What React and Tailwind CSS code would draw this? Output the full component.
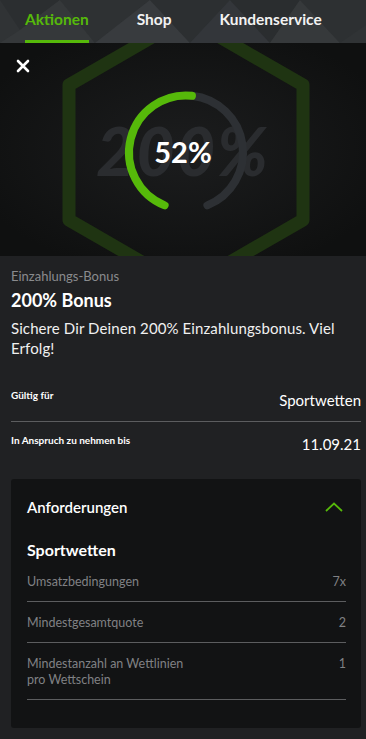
import React from "react";

const GREEN = "#56b90a";

// point on the gauge circle, angle measured clockwise from top
function pt(cx, cy, r, deg) {
  const a = (deg * Math.PI) / 180;
  return [cx + r * Math.sin(a), cy - r * Math.cos(a)];
}

function arc(cx, cy, r, from, to) {
  const [x1, y1] = pt(cx, cy, r, from);
  const [x2, y2] = pt(cx, cy, r, to);
  const large = to - from > 180 ? 1 : 0;
  return `M ${x1} ${y1} A ${r} ${r} 0 ${large} 1 ${x2} ${y2}`;
}

function HeaderPattern() {
  return (
    <svg className="absolute inset-0" width="366" height="43" viewBox="0 0 366 43">
      <rect width="366" height="43" fill="#303335" />
      <polygon points="0,0 60,0 20,30" fill="#2b2e30" />
      <polygon points="20,30 60,0 95,43 0,43" fill="#35383a" />
      <polygon points="60,0 150,0 95,43" fill="#2e3133" />
      <polygon points="150,0 95,43 190,43" fill="#383b3e" />
      <polygon points="150,0 230,0 190,43" fill="#2c2f31" />
      <polygon points="230,0 190,43 270,43" fill="#33363a" />
      <polygon points="230,0 300,0 270,43" fill="#2a2d2f" />
      <polygon points="300,0 270,43 340,43" fill="#36393b" />
      <polygon points="300,0 366,0 366,25 340,43" fill="#2d3032" />
    </svg>
  );
}

function HeroBackground() {
  return (
    <svg className="absolute inset-0" width="366" height="213" viewBox="0 0 366 213">
      <defs>
        <radialGradient id="glow" cx="50%" cy="50%" r="60%">
          <stop offset="0%" stopColor="#1c1d1e" />
          <stop offset="100%" stopColor="#0f1010" />
        </radialGradient>
      </defs>
      <rect width="366" height="213" fill="url(#glow)" />
      <polygon
        points="186,-25.5 303,42 303,177 186,244.5 69,177 69,42"
        fill="none"
        stroke="#1f3412"
        strokeWidth="13"
        strokeLinejoin="round"
      />
    </svg>
  );
}

function GaugeArc() {
  const cx = 186;
  const cy = 109.5;
  const r = 57;
  return (
    <svg className="absolute inset-0" width="366" height="213" viewBox="0 0 366 213">
      <path d={arc(cx, cy, r, 6, 158)} fill="none" stroke="#2d3034" strokeWidth="8" strokeLinecap="round" />
      <path d={arc(cx, cy, r, -158, 6)} fill="none" stroke={GREEN} strokeWidth="8" strokeLinecap="round" />
    </svg>
  );
}

function Row({ label, value }) {
  return (
    <div className="flex justify-between items-start pt-[13px] pb-[11px] border-b border-[#5c5d5f] text-[12.5px] leading-4 text-[#808184]">
      <span className="max-w-[170px]">{label}</span>
      <span>{value}</span>
    </div>
  );
}

export default function App() {
  return (
    <div
      className="w-[366px] h-[739px] overflow-hidden bg-[#202123] text-white"
      style={{ fontFamily: "Lato, 'Open Sans', sans-serif" }}
    >
      {/* Tabs */}
      <div className="relative h-[43px]">
        <HeaderPattern />
        <div className="relative flex gap-12 px-[25px] h-full text-[15.5px] font-bold">
          <div className="relative flex items-center pb-[3px] text-[#56b90a]">
            Aktionen
            <div className="absolute left-0 right-0 bottom-0 h-[3px] bg-[#56b90a]" />
          </div>
          <div className="flex items-center pb-[3px] text-[#f2f2f2]">Shop</div>
          <div className="flex items-center pb-[3px] text-[#f2f2f2]">Kundenservice</div>
        </div>
      </div>

      {/* Hero */}
      <div className="relative h-[213px] overflow-hidden">
        <HeroBackground />
        <div className="absolute left-0 right-0 top-[70px] text-center text-[66px] leading-[76px] font-black italic text-[#2a2c2f] tracking-[2px]">
          200%
        </div>
        <GaugeArc />
        <div className="absolute left-0 right-0 top-[91px] text-center text-[29px] leading-[36px] font-bold text-white">
          52%
        </div>
        <button className="absolute left-[16px] top-[16px] w-[14px] h-[14px]">
          <svg width="14" height="14" viewBox="0 0 14 14">
            <path d="M2 2 L12 12 M12 2 L2 12" stroke="#fff" strokeWidth="2.6" strokeLinecap="round" />
          </svg>
        </button>
      </div>

      {/* Content */}
      <div className="pl-[11px] pr-[5px] pt-[11px]">
        <div className="text-[13px] leading-[18px] text-[#8a8b8e]">Einzahlungs-Bonus</div>
        <div className="mt-[3px] text-[18px] leading-6 font-bold">200% Bonus</div>
        <div className="mt-[6px] text-[15px] leading-5 text-[#f0f0f0] pr-[6px] tracking-[0.1px]">
          Sichere Dir Deinen 200% Einzahlungsbonus. Viel Erfolg!
        </div>

        <div className="mt-[30px] flex justify-between items-start pb-[11px] border-b border-[#5c5d5f]">
          <span className="text-[10px] leading-[14px] font-bold">Gültig für</span>
          <span className="mt-[2px] text-[15px] leading-5">Sportwetten</span>
        </div>
        <div className="flex justify-between items-start pt-[11px]">
          <span className="text-[10px] leading-[14px] font-bold">In Anspruch zu nehmen bis</span>
          <span className="mt-[1px] text-[15px] leading-5">11.09.21</span>
        </div>

        {/* Requirements card */}
        <div className="mt-[25px] rounded-[3px] bg-[#121314] pl-4 pr-[15px] pt-[18px] pb-[28px]">
          <div className="flex justify-between items-center">
            <span className="text-[15px] leading-5 font-semibold">Anforderungen</span>
            <svg width="18" height="10" viewBox="0 0 18 10" className="mr-[3px]">
              <path d="M1 9 L9 1.5 L17 9" fill="none" stroke={GREEN} strokeWidth="1.8" />
            </svg>
          </div>
          <div className="mt-[22px] text-[16px] leading-[22px] font-bold">Sportwetten</div>
          <Row label="Umsatzbedingungen" value="7x" />
          <Row label="Mindestgesamtquote" value="2" />
          <Row label="Mindestanzahl an Wettlinien pro Wettschein" value="1" />
        </div>
      </div>
    </div>
  );
}
